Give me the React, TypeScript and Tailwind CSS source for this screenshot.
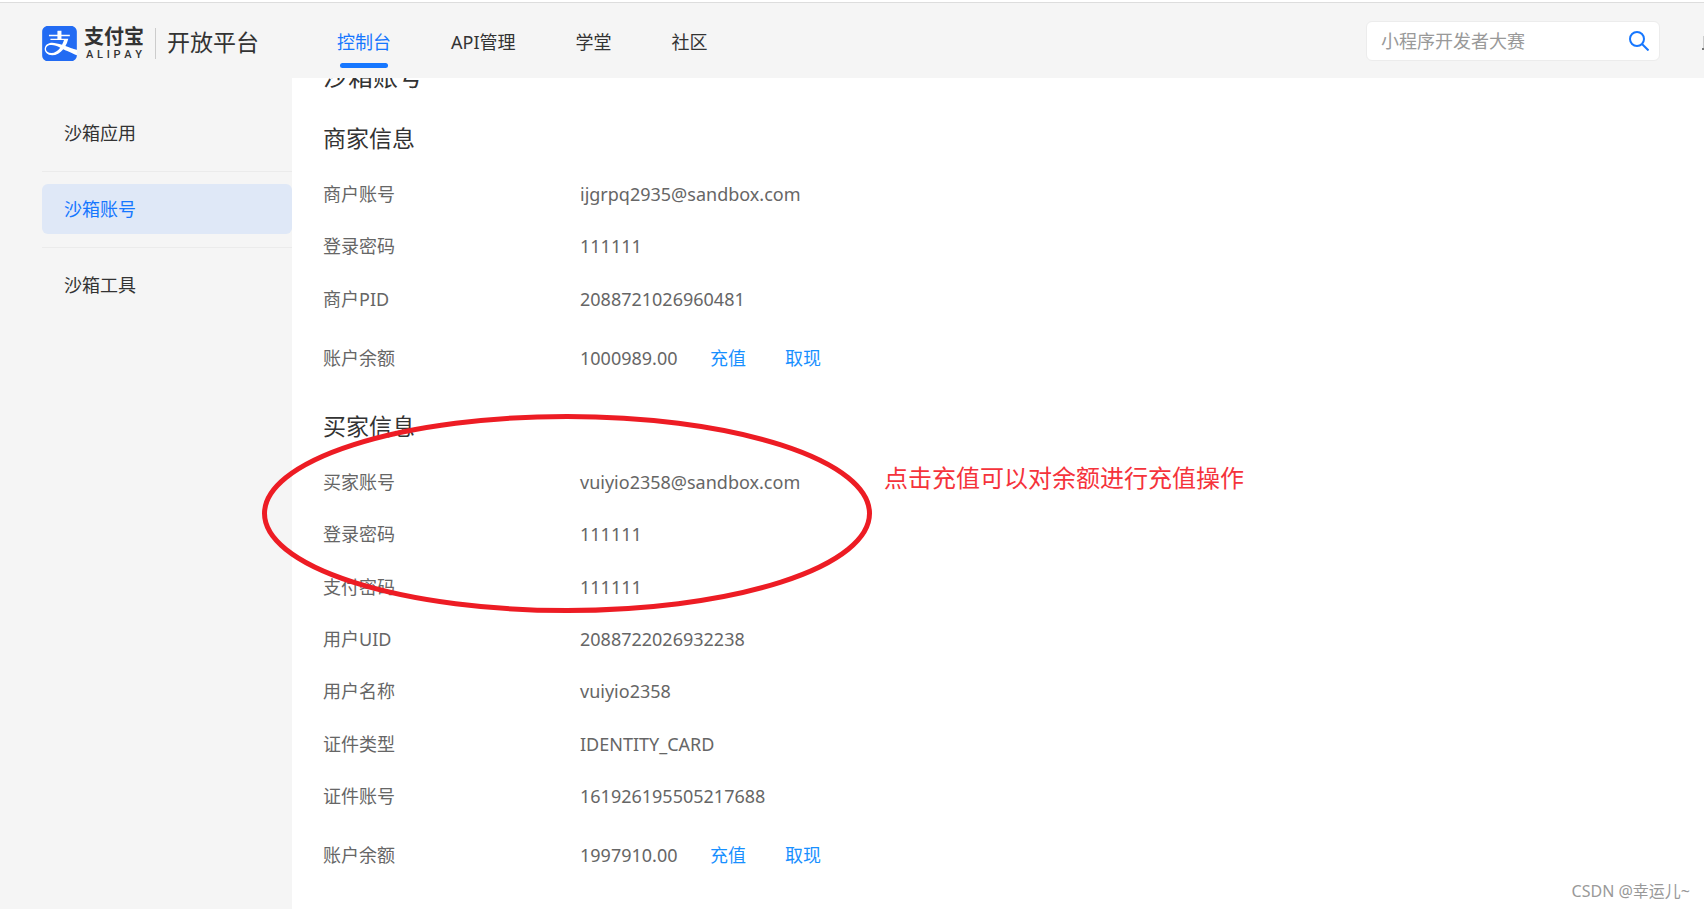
import { ReactNode, useState } from "react";
import { SiAlipay } from "react-icons/si";

type Field = {
    label: string;
    value: string;
};

const navItems = ["控制台", "API管理", "学堂", "社区"];
const menuItems = ["沙箱应用", "沙箱账号", "沙箱工具"];

const merchant: Field[] = [
    { label: "商户账号", value: "ijgrpq2935@sandbox.com" },
    { label: "登录密码", value: "111111" },
    { label: "商户PID", value: "2088721026960481" },
];

const buyer: Field[] = [
    { label: "买家账号", value: "vuiyio2358@sandbox.com" },
    { label: "登录密码", value: "111111" },
    { label: "支付密码", value: "111111" },
    { label: "用户UID", value: "2088722026932238" },
    { label: "用户名称", value: "vuiyio2358" },
    { label: "证件类型", value: "IDENTITY_CARD" },
    { label: "证件账号", value: "161926195505217688" },
];

const Logo = () => (
    <a href="#" className="mt-1 flex items-center text-[#333]">
        <span className="flex rounded-lg bg-white">
            <SiAlipay className="size-[35px] text-[#226bf3]" />
        </span>
        <span className="ml-[7px] flex w-[60px] flex-col font-['Roboto','Noto_Sans_CJK_SC',sans-serif]">
            <span className="text-[20px] leading-[23px] font-bold">支付宝</span>
            <span className="flex justify-between px-0.5 text-[11px] leading-3 font-medium">
                {"ALIPAY".split("").map((c, i) => (
                    <span key={i}>{c}</span>
                ))}
            </span>
        </span>
        <span className="ml-[11px] h-[31px] w-px bg-[#ccc]" />
        <span className="ml-[11px] pb-0.5 text-[23px] leading-8">开放平台</span>
    </a>
);

const Header = () => {
    const [query, setQuery] = useState("");

    return (
        <header className="relative z-10 flex h-[78px] items-center overflow-hidden border-t-2 border-white bg-[#f5f5f5] pt-0.5 pl-[42px] shadow-[inset_0_1px_0_#ddd]">
            <Logo />
            <nav className="ml-[78px] flex gap-[60px] self-stretch">
                {navItems.map((item, i) => (
                    <a
                        key={item}
                        href="#"
                        className={`relative flex items-center pt-0.5 text-[18px] ${i === 0 ? "text-[#1677ff]" : "text-[#333]"}`}>
                        {item}
                        {i === 0 && <span className="absolute inset-x-[3px] bottom-2.5 h-[5px] rounded-full bg-[#1677ff]" />}
                    </a>
                ))}
            </nav>
            <form className="ml-auto flex h-10 w-[294px] items-center rounded-md border border-[#ececec] bg-white pr-2.5 pl-3.5">
                <input
                    aria-label="搜索"
                    placeholder="小程序开发者大赛"
                    value={query}
                    onChange={(e) => setQuery(e.target.value)}
                    className="min-w-0 flex-1 text-[18px] outline-none placeholder:text-[#999]"
                />
                <button type="button" aria-label="搜索" className="cursor-pointer text-[#1677ff]">
                    <svg className="size-5" viewBox="0 0 20 20" fill="none" stroke="currentColor" strokeWidth="2">
                        <circle cx="8" cy="8" r="7" />
                        <path d="M13 13l6.500 6.500" />
                    </svg>
                </button>
            </form>
            <svg className="mt-1 ml-[42px] h-[14px] w-0.5 shrink-0" viewBox="0 0 2 14">
                <path d="M1 0h1v12h-1z" fill="#ccc" />
                <path d="M0 12h2v2h-2z" fill="#777" />
            </svg>
        </header>
    );
};

const Sidebar = () => {
    const [active, setActive] = useState(1);

    return (
        <aside className="w-[292px] shrink-0 pt-[30px] pl-[42px]">
            <ul className="divide-y divide-[#ebebeb]">
                {menuItems.map((item, i) => (
                    <li key={item} className="pt-3 pb-[13px] first:pt-0">
                        <button
                            onClick={() => setActive(i)}
                            className={`h-[50px] w-full cursor-pointer rounded-md px-[22px] text-left text-[18px] ${
                                i === active ? "bg-[#dfe8f7] text-[#1677ff]" : "text-[#333]"
                            }`}>
                            {item}
                        </button>
                    </li>
                ))}
            </ul>
        </aside>
    );
};

const Row = ({ label, children }: { label: string; children: ReactNode }) => (
    <div className="flex flex-1 items-center">
        <dt className="w-[257px] shrink-0">{label}</dt>
        <dd className="flex">{children}</dd>
    </div>
);

const Account = ({ title, fields, balance, className }: { title: string; fields: Field[]; balance: string; className: string }) => (
    <section>
        <h2 className="text-[23px] leading-9 text-[#333]">{title}</h2>
        <dl className="mt-3 text-[18px] leading-7 text-[#666]">
            <div className={`flex flex-col ${className}`}>
                {fields.map((f) => (
                    <Row key={f.label} label={f.label}>
                        {f.value}
                    </Row>
                ))}
            </div>
            <div className="mt-[7px] flex h-[52px]">
                <Row label="账户余额">
                    <span className="w-[130px]">{balance}</span>
                    <span className="flex gap-[39px] text-[#1890ff]">
                        <a href="#">充值</a>
                        <a href="#">取现</a>
                    </span>
                </Row>
            </div>
        </dl>
    </section>
);

const App = () => {
    return (
        <div className="relative flex min-h-screen flex-col overflow-hidden bg-[#f5f5f5] font-['Noto_Sans','Noto_Sans_CJK_SC',sans-serif]">
            <Header />
            <div className="flex flex-1">
                <Sidebar />
                <main className="flex-1 bg-white pl-[31px]">
                    <h1 className="-mt-5 text-[25px] leading-9 text-[#333]">沙箱账号</h1>
                    <div className="mt-[26px] flex flex-col gap-6">
                        <Account title="商家信息" fields={merchant} balance="1000989.00" className="min-h-[157px]" />
                        <Account title="买家信息" fields={buyer} balance="1997910.00" className="min-h-[366px]" />
                    </div>
                </main>
            </div>

            {/* annotations drawn over the page */}
            <svg
                className="pointer-events-none absolute top-[414px] left-[262px] h-[199px] w-[610px]"
                viewBox="0 0 610 199"
                fill="none"
                stroke="#ed1c24"
                strokeWidth="5">
                <ellipse cx="305" cy="99.500" rx="302.500" ry="97" />
            </svg>
            <p className="absolute top-[460px] left-[884px] text-[24px] leading-9 text-[#f5333b]">点击充值可以对余额进行充值操作</p>
            <p className="absolute right-3.5 bottom-1.5 text-[16px] leading-6 text-[#999]">CSDN @幸运儿~</p>
        </div>
    );
};

export default App;
